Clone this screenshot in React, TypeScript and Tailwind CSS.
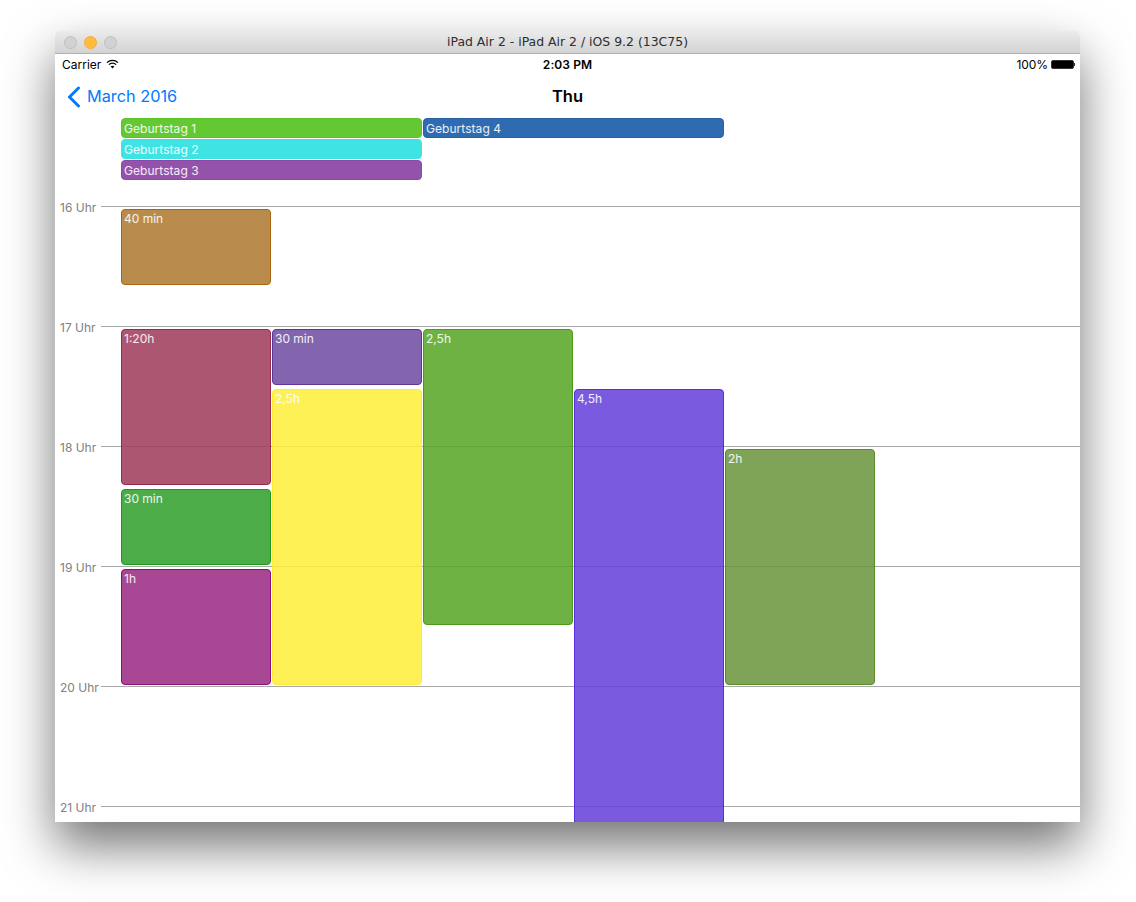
const hours = ['16 Uhr', '17 Uhr', '18 Uhr', '19 Uhr', '20 Uhr', '21 Uhr'];

// coordinates are relative to the hour grid; the place on the canvas is the content
const events = [
  { label: '40 min', left: 66, top: 9, width: 150, height: 76, className: 'bg-[#ad772ed9] border-[#a8660f]' },
  { label: '1:20h', left: 66, top: 129, width: 150, height: 156, className: 'bg-[#9e3859d9] border-[#98284f]' },
  { label: '30 min', left: 217, top: 129, width: 150, height: 56, className: 'bg-[#6c4aa0d9] border-[#5c3696]' },
  { label: '2,5h', left: 217, top: 189, width: 150, height: 296, className: 'bg-[#feee37d9] border-[#fdeb3a]' },
  { label: '2,5h', left: 368, top: 129, width: 150, height: 296, className: 'bg-[#56a523d9] border-[#4d9a1a]' },
  { label: '4,5h', left: 519, top: 189, width: 150, height: 540, className: 'bg-[#633edbd9] border-[#5530d8]' },
  { label: '2h', left: 670, top: 249, width: 150, height: 236, className: 'bg-[#69943ad9] border-[#5c8c28]' },
  { label: '30 min', left: 66, top: 289, width: 150, height: 76, className: 'bg-[#2d9e28d9] border-[#1a9a18]' },
  { label: '1h', left: 66, top: 369, width: 150, height: 116, className: 'bg-[#992881d9] border-[#8a0f78]' },
];

function AllDay({ label, className }: { label: string; className: string }) {
  return (
    <div className={`h-5 w-[301px] rounded-[4px] border pl-[2px] text-xs leading-[20px] tracking-[0.05px] text-white/90 ${className}`}>
      {label}
    </div>
  );
}

export default function App() {
  return (
    <div className="h-[902px] w-[1136px] overflow-hidden bg-white pl-[55px] pt-[31px] font-['Inter',sans-serif]">
      <div className="flex h-[791px] w-[1025px] flex-col overflow-hidden rounded-t-[5px] bg-white shadow-[0_24px_50px_0_rgba(0,0,0,0.55)]">
        {/* Title bar */}
        <div className="relative flex h-[23px] shrink-0 items-center justify-center border-b border-[#b1b1b1] bg-gradient-to-b from-[#ebebeb] to-[#d3d3d3] font-['DejaVu_Sans',sans-serif] text-[12.45px] text-[#2e2e2e]">
          <div className="absolute left-[9px] top-[5px] flex gap-[7px]">
            <span className="h-[13px] w-[13px] rounded-full border border-[#bdbdbd] bg-[#d2d2d2]" />
            <span className="h-[13px] w-[13px] rounded-full border border-[#f0ae3a] bg-[#fdbb40]" />
            <span className="h-[13px] w-[13px] rounded-full border border-[#bdbdbd] bg-[#d2d2d2]" />
          </div>
          iPad Air 2 - iPad Air 2 / iOS 9.2 (13C75)
        </div>

        {/* Status bar */}
        <div className="relative flex h-[21px] shrink-0 items-center justify-between pl-[7px] pr-[5px] text-xs text-black">
          <div className="flex items-center gap-[5px]">
            <span>Carrier</span>
            <svg width="13" height="10" viewBox="0 0 13 10" className="mb-[2px]" fill="none" stroke="#000" strokeWidth="1.3">
              <path d="M1 3.6a7.8 7.8 0 0 1 11 0" />
              <path d="M2.9 5.6a5 5 0 0 1 7.2 0" />
              <path d="M6.5 9.6 4.7 7.5a2.6 2.6 0 0 1 3.6 0z" fill="#000" stroke="none" />
            </svg>
          </div>
          <span className="absolute left-1/2 -translate-x-1/2 font-semibold tracking-[0.1px]">2:03 PM</span>
          <div className="flex items-center gap-[3px]">
            <span className="tracking-[-0.1px]">100%</span>
            <div className="flex items-center">
              <div className="h-[9px] w-[23px] rounded-[2px] border border-[#333] bg-black" />
              <div className="h-[3px] w-px bg-[#333]" />
            </div>
          </div>
        </div>

        {/* Navigation */}
        <div className="relative flex h-[43px] shrink-0 items-center pl-[12px] text-[17px]">
          <div className="flex items-center gap-[6px] text-[#007aff]">
            <svg width="14" height="22" viewBox="0 0 14 22" fill="none" stroke="#007aff" strokeWidth="3" strokeLinecap="round" strokeLinejoin="round">
              <path d="M11.5 2 2.5 11l9 9" />
            </svg>
            <span className="text-[16.3px]">March 2016</span>
          </div>
          <span className="absolute left-1/2 -translate-x-1/2 text-[16.5px] font-semibold text-black">Thu</span>
        </div>

        {/* All-day events */}
        <div className="flex h-[82px] shrink-0 gap-px pl-[66px]">
          <div className="flex flex-col gap-px">
            <AllDay label="Geburtstag 1" className="bg-[#64c832] border-[#5cc22a]" />
            <AllDay label="Geburtstag 2" className="bg-[#40e3e3] border-[#40e3e3]" />
            <AllDay label="Geburtstag 3" className="bg-[#9452aa] border-[#8c48a6]" />
          </div>
          <AllDay label="Geburtstag 4" className="bg-[#2f6bb0] border-[#2a5fa3]" />
        </div>

        {/* Hour grid */}
        <div className="relative flex-1">
          {hours.map((hour) => (
            <div key={hour} className="mb-[107px] flex h-[13px] items-center gap-[4px] pl-[5px]">
              <span className="w-[37px] translate-y-px whitespace-nowrap text-xs text-[#808080]">{hour}</span>
              <div className="h-px flex-1 bg-[#a8a8a8]" />
            </div>
          ))}
          {events.map((event) => (
            <div
              key={`${event.label}-${event.left}-${event.top}`}
              className={`absolute rounded-[4px] border pl-[2px] text-xs leading-[17px] text-white/90 ${event.className}`}
              style={{ left: event.left, top: event.top, width: event.width, height: event.height }}
            >
              {event.label}
            </div>
          ))}
        </div>
      </div>
    </div>
  );
}
